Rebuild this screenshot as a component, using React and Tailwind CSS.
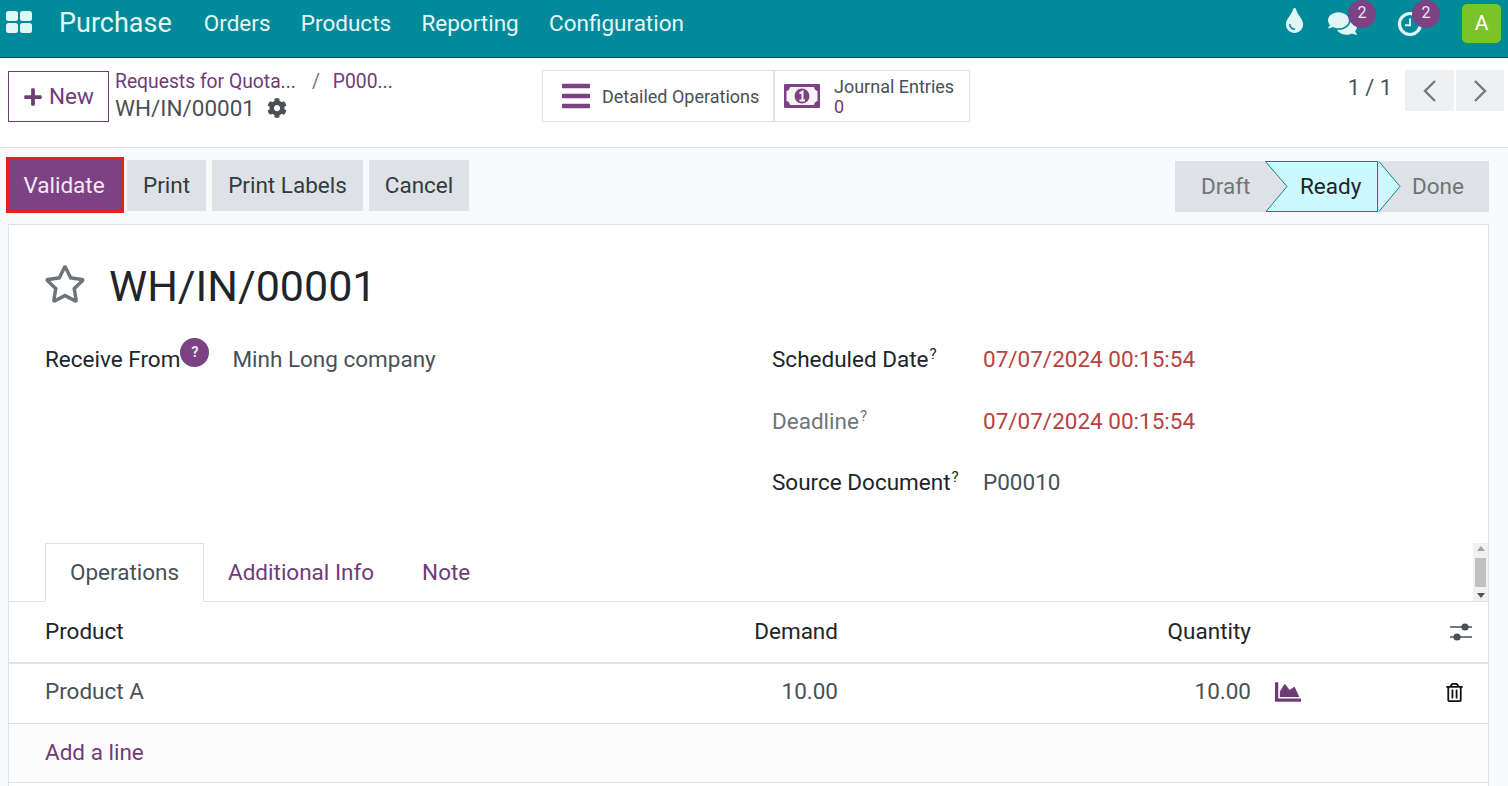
import React from 'react';
import { FaPlus, FaCog, FaBars, FaTint, FaComments, FaRegStar, FaChartArea, FaRegTrashAlt } from 'react-icons/fa';

const AppsIcon = () => (
  <svg width="26" height="22" viewBox="0 0 26 22" fill="#dff5f6">
    <rect x="0" y="0" width="12" height="10" rx="2.5" />
    <rect x="14" y="0" width="12" height="10" rx="2.5" />
    <rect x="0" y="12" width="12" height="10" rx="2.5" />
    <rect x="14" y="12" width="12" height="10" rx="2.5" />
  </svg>
);

const ClockIcon = () => (
  <svg width="26" height="26" viewBox="0 0 26 26" fill="none" stroke="#dff5f6" strokeWidth="3.2">
    <circle cx="13" cy="13" r="10.5" />
    <path d="M13 7.5V14.2H8" strokeWidth="2" />
  </svg>
);

const AdjustIcon = () => (
  <svg width="24" height="22" viewBox="0 0 24 22" fill="#4a4f55" stroke="#4a4f55">
    <path d="M1 6H23M1 16H23" strokeWidth="1.4" />
    <circle cx="16" cy="6" r="3.6" stroke="none" />
    <circle cx="8" cy="16" r="3.6" stroke="none" />
  </svg>
);

const MoneyIcon = () => (
  <svg width="36" height="24" viewBox="0 0 36 24">
    <rect width="36" height="24" rx="1" fill="#7c4284" />
    <path d="M6 3H30Q30.5 6.5 33.500 7V17Q30.500 17.500 30 21H6Q5.500 17.500 2.500 17V7Q5.500 6.500 6 3Z" fill="#f7f2f7" />
    <ellipse cx="18" cy="12" rx="7.500" ry="7.500" fill="#7c4284" />
    <path d="M15.500 9.500L18.500 7.500V16.500M15.500 16.500H21" fill="none" stroke="#f7f2f7" strokeWidth="2" />
  </svg>
);

const Chevron = ({ d }) => (
  <svg width="16" height="24" viewBox="0 0 16 24" fill="none" stroke="#77797c" strokeWidth="2.4">
    <path d={d} />
  </svg>
);

const Badge = ({ children, className }) => (
  <span className={`absolute w-[28px] h-[28px] rounded-full bg-[#7c4284] text-[#f0e6f0] text-[16px] flex items-center justify-center pb-[3px] ${className}`}>
    {children}
  </span>
);

const Sup = () => <sup className="text-[15px] ml-[1px] -top-[8px]">?</sup>;

const Field = ({ label, value, muted, red }) => (
  <div className="flex h-[61.5px] items-start pt-[2px]">
    <span className={`w-[211px] leading-[30px] ${muted ? 'text-[#6f7479]' : 'text-[#212529]'}`}>
      {label}
      <Sup />
    </span>
    <span className={`leading-[30px] ${red ? 'text-[#b8423e]' : 'text-[#4a5056]'}`}>{value}</span>
  </div>
);

const App = () => {
  const menus = ['Orders', 'Products', 'Reporting', 'Configuration'];
  return (
    <div className="w-[1508px] h-[786px] overflow-hidden bg-[#f8f9fa] font-['Roboto',sans-serif] text-[22.5px] text-[#212529]">
      <nav className="h-[58px] bg-[#008a9a] border-b border-[#05505a] flex items-center text-[#e6f6f7]">
        <div className="ml-[6px] mb-[14px] flex">
          <AppsIcon />
        </div>
        <span className="ml-[27px] mb-[10px] text-[27px]">Purchase</span>
        <div className="ml-[32px] mb-[9px] flex gap-[30.3px]">
          {menus.map((m) => (
            <span key={m}>{m}</span>
          ))}
        </div>
        <div className="ml-auto flex items-center">
          <FaTint className="text-[#dff5f6] text-[25px] mb-[16px]" />
          <div className="relative ml-[21px] mb-[10px]">
            <FaComments className="text-[#dff5f6] text-[29px]" />
            <Badge className="-top-[9px] left-[20px]">2</Badge>
          </div>
          <div className="relative ml-[40px] mb-[9px]">
            <ClockIcon />
            <Badge className="-top-[11px] left-[15px]">2</Badge>
          </div>
          <div className="ml-[39px] mr-[7px] mb-[10px] w-[39px] h-[39px] rounded-[5px] bg-[#7cc32b] text-white text-[21px] flex items-center justify-center">A</div>
        </div>
      </nav>

      <header className="h-[90px] bg-white border-b border-[#dee2e6] flex items-start relative">
        <button className="mt-[13px] ml-[8px] w-[101px] h-[51px] border border-[#703c77] flex items-center pl-[14px] gap-[6px] text-[#703c77] text-[22.5px]">
          <FaPlus className="text-[20px]" />
          New
        </button>
        <div className="ml-[6px] mt-[10px] w-[427px]">
          <div className="flex text-[#703c77] text-[19.3px] leading-[28px]">
            <span>Requests for Quota...</span>
            <span className="ml-[16px] text-[#6f7479]">/</span>
            <span className="ml-[13px]">P000...</span>
          </div>
          <div className="-mt-[1px] flex items-center text-[#4a5056] leading-[26px]">
            WH/IN/00001
            <FaCog className="ml-[12px] text-[20px]" />
          </div>
        </div>
        <div className="mt-[12px] flex h-[52px] border border-[#dee2e6] bg-white text-[#4a5056] text-[18px]">
          <div className="w-[232px] flex items-center border-r-2 border-[#dee2e6] pl-[17px]">
            <FaBars className="text-[#7c4284] w-[32px] h-[32px]" />
            <span className="ml-[10px]">Detailed Operations</span>
          </div>
          <div className="w-[194px] flex items-center pl-[9px]">
            <MoneyIcon />
            <div className="ml-[14px] pt-[2px] leading-[20px]">
              <div>Journal Entries</div>
              <div className="text-[#703c77]">0</div>
            </div>
          </div>
        </div>
        <div className="ml-auto mt-[12px] mr-[4px] flex items-center">
          <span className="text-[21.8px] text-[#4a5056] mb-[4px]">1 / 1</span>
          <div className="ml-[13px] w-[49px] h-[41px] bg-[#eff0f1] flex items-center justify-center">
            <Chevron d="M13 2L3 12L13 22" />
          </div>
          <div className="ml-[2px] w-[48px] h-[41px] bg-[#eff0f1] flex items-center justify-center">
            <Chevron d="M3 2L13 12L3 22" />
          </div>
        </div>
      </header>

      <div className="h-[76px] flex items-start">
        <div className="mt-[12px] ml-[6px] flex items-start gap-[6px]">
          <button className="-mt-[3px] w-[118px] h-[56px] border-[3px] border-[#ec1c24] bg-[#7c4284] text-[#f3e9f3] pt-[1px] pr-[2px]">Validate</button>
          <button className="-ml-[3px] w-[79px] h-[51px] bg-[#dee1e5] text-[#343a40]">Print</button>
          <button className="w-[151px] h-[51px] bg-[#dee1e5] text-[#343a40]">Print Labels</button>
          <button className="w-[100px] h-[51px] bg-[#dee1e5] text-[#343a40]">Cancel</button>
        </div>
        <div className="ml-auto mr-[19px] mt-[13px] w-[314px] h-[51px] bg-[#dee1e5] relative flex items-center pt-[1px]">
          <span className="ml-[26px] text-[#6f7479]">Draft</span>
          <svg className="absolute left-[90px] top-0" width="136" height="51" viewBox="0 0 136 51">
            <path d="M0.5 0.5H112.5V50.5H1L22 25.5Z" fill="#ccf9fd" stroke="#1a7f8c" />
            <path d="M114 0.5L135 25.5L114 50.5" fill="#ccf9fd" stroke="#1a7f8c" />
          </svg>
          <span className="absolute left-[125px] text-[#212529]">Ready</span>
          <span className="absolute left-[237px] text-[#6f7479]">Done</span>
        </div>
      </div>

      <main className="ml-[8px] mr-[19px] h-[600px] bg-white border border-[#dee2e6]">
        <div className="pl-[36px] pt-[34px] flex items-center h-[88px]">
          <FaRegStar className="text-[#6f7479] text-[42px] -ml-[1px] mb-[5px]" />
          <h1 className="ml-[23px] text-[43px] leading-[56px] text-[#212529]">WH/IN/00001</h1>
        </div>
        <div className="pl-[36px] pt-[29px] flex h-[231px]">
          <div className="w-[727px] flex items-start">
            <span className="leading-[30px] mt-[2px]">Receive From</span>
            <span className="-mt-[4px] w-[29px] h-[29px] rounded-full bg-[#7c4284] text-[#f0e6f0] text-[14px] font-bold flex items-center justify-center">?</span>
            <span className="ml-[23px] mt-[2px] leading-[30px] text-[#4a5056]">Minh Long company</span>
          </div>
          <div className="flex-1">
            <Field label="Scheduled Date" value="07/07/2024 00:15:54" red />
            <Field label="Deadline" value="07/07/2024 00:15:54" muted red />
            <Field label="Source Document" value="P00010" />
          </div>
        </div>

        <div className="h-[58px] border-b border-[#dee2e6] flex items-end justify-between">
          <div className="flex ml-[36px] h-[59px] -mb-[1px]">
            <span className="w-[159px] pt-[1px] bg-white border border-[#dee2e6] border-b-white text-[#4a5056] flex items-center justify-center">Operations</span>
            <span className="ml-[24px] pt-[1px] text-[#703c77] flex items-center">Additional Info</span>
            <span className="ml-[48px] pt-[1px] text-[#703c77] flex items-center">Note</span>
          </div>
          <div className="w-[15px] h-[58px] bg-[#f1f1f1] flex flex-col items-center justify-between py-[3px]">
            <span className="w-0 h-0 border-x-[4px] border-x-transparent border-b-[5px] border-b-[#a3a3a3]" />
            <span className="w-[11px] h-[29px] bg-[#c1c1c1]" />
            <span className="w-0 h-0 border-x-[4px] border-x-transparent border-t-[5px] border-t-[#505050]" />
          </div>
        </div>

        <div className="h-[62px] border-b-2 border-[#dee2e6] flex items-center pl-[36px]">
          <span className="w-[593px]">Product</span>
          <span className="w-[200px] text-right">Demand</span>
          <span className="w-[413px] text-right">Quantity</span>
          <span className="ml-[198px]">
            <AdjustIcon />
          </span>
        </div>
        <div className="h-[60px] border-b border-[#dee2e6] flex items-center pl-[36px] pb-[3px] text-[#4a5056]">
          <span className="w-[593px]">Product A</span>
          <span className="w-[200px] text-right">10.00</span>
          <span className="w-[413px] text-right">10.00</span>
          <FaChartArea className="ml-[24px] text-[#703c77] text-[26px]" />
          <FaRegTrashAlt className="ml-[144px] text-[#111111] text-[19px]" />
        </div>
        <div className="h-[59px] border-b border-[#dee2e6] bg-[#fcfcfc] flex items-center pl-[36px] text-[#703c77]">Add a line</div>
      </main>
    </div>
  );
};

export default App;
